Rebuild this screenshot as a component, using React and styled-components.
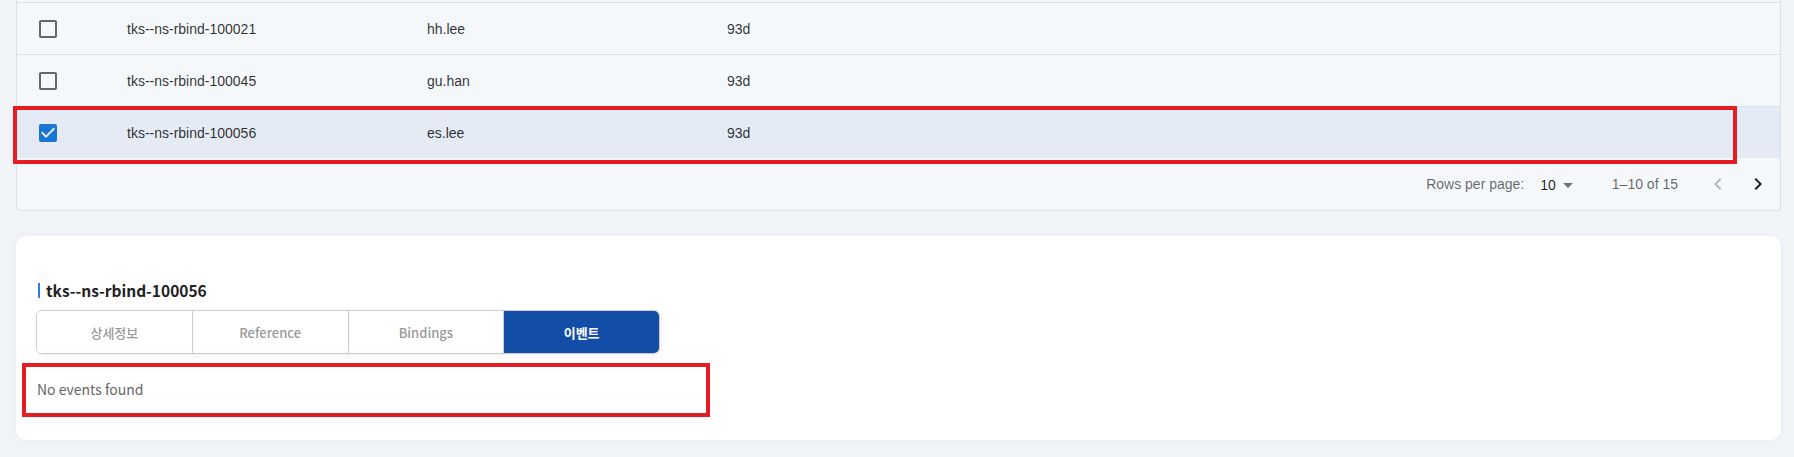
import React from "react";
import styled, { createGlobalStyle } from "styled-components";

const GlobalStyle = createGlobalStyle`
  html, body {
    margin: 0;
    padding: 0;
    background-color: #f2f5f8;
  }
  * {
    box-sizing: border-box;
  }
`;

const Page = styled.div`
  position: relative;
  padding: 0 13px 16px 16px;
  font-family: "Liberation Sans", Arial, sans-serif;
`;

const TableCard = styled.div`
  background-color: #f5f8fb;
  border: 1px solid #dde1e6;
  border-top: none;
  border-radius: 0 0 4px 4px;
  padding-top: 2px;
`;

const Row = styled.div`
  display: grid;
  grid-template-columns: 110px 300px 300px 1fr;
  align-items: center;
  height: 52px;
  border-top: 1px solid #e0e0e0;
  background-color: ${(props) => (props.$selected ? "#e4ebf5" : "transparent")};
  font-size: 14px;
  color: rgba(0, 0, 0, 0.82);

  &:last-of-type {
    border-bottom: 1px solid #e0e0e0;
    height: 53px;
  }
`;

const CheckCell = styled.div`
  display: flex;
  align-items: center;
  padding-left: 19px;

  svg {
    display: block;
  }
`;

const Cell = styled.div`
  white-space: nowrap;
`;

const Pagination = styled.div`
  display: flex;
  justify-content: flex-end;
  align-items: center;
  height: 52px;
  padding-right: 2px;
  font-size: 14px;
  color: rgba(0, 0, 0, 0.6);
`;

const SelectBox = styled.div`
  display: flex;
  align-items: center;
  margin: 2px 32px 0 8px;
  padding-left: 8px;
  color: rgba(0, 0, 0, 0.87);

  svg {
    display: block;
  }
`;

const Actions = styled.div`
  display: flex;
  margin-left: 20px;
`;

const IconButton = styled.button`
  display: flex;
  align-items: center;
  justify-content: center;
  width: 40px;
  height: 40px;
  padding: 0;
  border: none;
  background: none;
  color: ${(props) => (props.disabled ? "rgba(0, 0, 0, 0.26)" : "rgba(0, 0, 0, 0.87)")};
  cursor: ${(props) => (props.disabled ? "default" : "pointer")};
`;

const DetailCard = styled.div`
  margin-top: 25px;
  background-color: #ffffff;
  border-radius: 10px;
  box-shadow: 0 0 12px rgba(30, 60, 110, 0.05);
  padding: 42px 20px 41px 20px;
  font-family: "Noto Sans CJK KR", "Noto Sans", sans-serif;
`;

const Title = styled.h3`
  display: flex;
  align-items: center;
  margin: 0;
  height: 24px;
  font-size: 15.5px;
  font-weight: 700;
  color: #222;

  &::before {
    content: "";
    width: 2px;
    height: 15px;
    margin: 0 6px 0 2px;
    background-color: #2f7be5;
  }
`;

const Tabs = styled.div`
  display: flex;
  width: 624px;
  margin-top: 8px;
  border: 1px solid #cccccc;
  border-radius: 6px;
  overflow: hidden;
  box-shadow: 2px 2px 6px rgba(0, 0, 0, 0.06);
`;

const Tab = styled.button`
  flex: 1;
  height: 42px;
  padding: 0;
  border: none;
  border-right: 1px solid #cccccc;
  background-color: ${(props) => (props.$active ? "#124ea7" : "#ffffff")};
  color: ${(props) => (props.$active ? "#ffffff" : "#999999")};
  font-family: inherit;
  font-size: 13px;
  font-weight: ${(props) => (props.$active ? 700 : 500)};
  cursor: pointer;

  &:last-child {
    border-right: none;
  }
`;

const EmptyText = styled.div`
  margin-top: 25px;
  padding-left: 1px;
  line-height: 20px;
  font-size: 14px;
  color: #666666;
`;

const Highlight = styled.div`
  position: absolute;
  border: 4px solid #e51c23;
  pointer-events: none;
`;

const rows = [
  { name: "tks--ns-rbind-100021", user: "hh.lee", age: "93d" },
  { name: "tks--ns-rbind-100045", user: "gu.han", age: "93d" },
  { name: "tks--ns-rbind-100056", user: "es.lee", age: "93d", selected: true },
];

const tabs = ["상세정보", "Reference", "Bindings", "이벤트"];

function CheckIcon({ checked }) {
  if (checked) {
    return (
      <svg width="24" height="24" viewBox="0 0 24 24">
        <path
          fill="#1976d2"
          d="M19 3H5c-1.11 0-2 .9-2 2v14c0 1.1.89 2 2 2h14c1.11 0 2-.9 2-2V5c0-1.1-.89-2-2-2zm-9 14l-5-5 1.41-1.41L10 14.17l7.59-7.59L19 8l-9 9z"
        />
      </svg>
    );
  }
  return (
    <svg width="24" height="24" viewBox="0 0 24 24">
      <path
        fill="#666666"
        d="M19 5v14H5V5h14m0-2H5c-1.1 0-2 .9-2 2v14c0 1.1.9 2 2 2h14c1.1 0 2-.9 2-2V5c0-1.1-.9-2-2-2z"
      />
    </svg>
  );
}

export default function App() {
  return (
    <>
      <GlobalStyle />
      <Page>
        <TableCard>
          {rows.map((row) => (
            <Row key={row.name} $selected={row.selected}>
              <CheckCell>
                <CheckIcon checked={row.selected} />
              </CheckCell>
              <Cell>{row.name}</Cell>
              <Cell>{row.user}</Cell>
              <Cell>{row.age}</Cell>
            </Row>
          ))}
          <Pagination>
            <span>Rows per page:</span>
            <SelectBox>
              <span>10</span>
              <svg width="24" height="24" viewBox="0 0 24 24">
                <path fill="rgba(0,0,0,0.54)" d="M7 10l5 5 5-5z" />
              </svg>
            </SelectBox>
            <span>1–10 of 15</span>
            <Actions>
              <IconButton disabled>
                <svg width="24" height="24" viewBox="0 0 24 24">
                  <path
                    fill="currentColor"
                    d="M15.41 16.59 10.83 12l4.58-4.59L14 6l-6 6 6 6 1.41-1.41z"
                  />
                </svg>
              </IconButton>
              <IconButton>
                <svg width="24" height="24" viewBox="0 0 24 24">
                  <path
                    fill="currentColor"
                    d="M8.59 16.59 13.17 12 8.59 7.41 10 6l6 6-6 6-1.41-1.41z"
                  />
                </svg>
              </IconButton>
            </Actions>
          </Pagination>
        </TableCard>

        <DetailCard>
          <Title>tks--ns-rbind-100056</Title>
          <Tabs>
            {tabs.map((tab) => (
              <Tab key={tab} $active={tab === "이벤트"}>
                {tab}
              </Tab>
            ))}
          </Tabs>
          <EmptyText>No events found</EmptyText>
        </DetailCard>

        <Highlight style={{ left: 13, top: 106, width: 1724, height: 58 }} />
        <Highlight style={{ left: 22, top: 363, width: 688, height: 54 }} />
      </Page>
    </>
  );
}
